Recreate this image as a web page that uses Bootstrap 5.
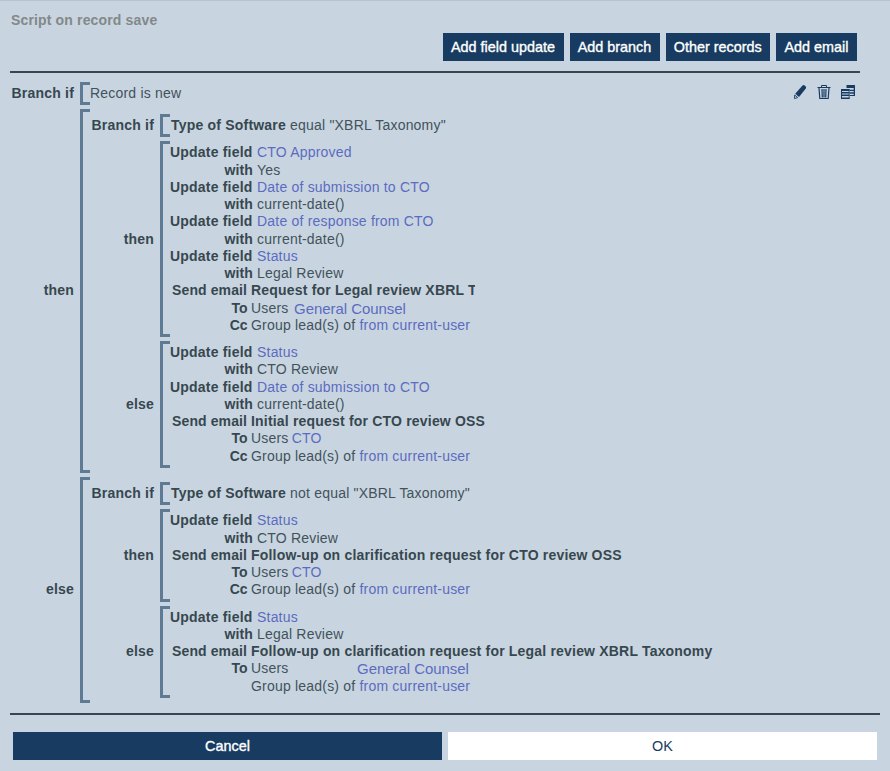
<!DOCTYPE html>
<html lang="en">
<head>
<meta charset="utf-8">
<title>Script on record save</title>
<meta name="viewport" content="width=device-width, initial-scale=1">
<link href="https://cdn.jsdelivr.net/npm/bootstrap@5.3.0/dist/css/bootstrap.min.css" rel="stylesheet">
<style>
body{background:#c8d5e0;color:#42525b;font:14px/17.25px "Liberation Sans",Arial,sans-serif;letter-spacing:.2px;height:771px;overflow:hidden;border-top:1px solid #b4c4d1}
b,.tag{font-weight:700;color:#37474f}
.heading{font-size:14px;line-height:17px;font-weight:700;color:#838888;letter-spacing:.15px;margin:0;padding:11px 0 0 11px}
.tools{gap:6px;padding:4px 33px 0 0}
.act{--bs-btn-border-radius:0;--bs-btn-border-width:0;--bs-btn-font-size:14.4px;--bs-btn-line-height:28px;--bs-btn-padding-y:0;--bs-btn-padding-x:8px;--bs-btn-color:#fff;--bs-btn-bg:#183c61;--bs-btn-hover-bg:#214d79;--bs-btn-hover-color:#fff;letter-spacing:0;-webkit-text-stroke:.35px currentColor;white-space:nowrap}
.tools .act{padding:0 8.6px 0 8px}
.act-ok{--bs-btn-bg:#fff;--bs-btn-color:#183c61;-webkit-text-stroke:0}
.rule{height:2px;background:#37474f;margin-left:10px}
.rule-top{width:850px;margin-top:10px}
.rule-end{width:870px;margin-top:10.5px}
.script{padding-top:8.7px}
.tag{flex:none;width:80px;text-align:right;padding-right:6px}
.tag-in{width:70px}
.tag-up{padding-bottom:1.5px}
.brace{position:relative;border-left:3px solid #5f7b94;padding:3px 0}
.brace::before,.brace::after{content:"";position:absolute;left:0;width:7px;height:3px;background:#5f7b94}
.brace::before{top:0}.brace::after{bottom:0}
.outer{padding:5.125px 0 5.125px 7px}
.line{display:flex;height:17.25px;white-space:pre}
.line>b:first-child{flex:none;width:82px;text-align:right;margin-left:7px;margin-right:5px}
.line>b.word{width:83px;margin-right:4px;letter-spacing:.1px}
.line.mail>b:first-child{width:77px;margin-right:4px;letter-spacing:.1px}
.line.mail>b.dest{width:77.6px;margin-right:3.4px;letter-spacing:0}
.subject{letter-spacing:.19px}
.cond{padding-left:7.5px;white-space:pre;height:23.25px}
.cond-field{padding-left:8px}
.plain{padding-left:7px}
.gap-b{margin-bottom:4px}
.ref{color:#5c6bc0}
.near{margin-left:-1px}
.big{font-size:15px;letter-spacing:-.05px;padding-left:5.5px;line-height:18px}
.far{padding-left:68.5px}
.cut{width:224px;overflow:hidden}
.icons{gap:8px;padding-right:34px;height:20px;padding-bottom:2px}
.foot{gap:6px;padding:17px 13px 0}
</style>
<script src="https://cdn.jsdelivr.net/npm/bootstrap@5.3.0/dist/js/bootstrap.bundle.min.js"></script>
</head>
<body>
<h1 class="heading">Script on record save</h1>
<div class="tools d-flex justify-content-end">
<button class="btn act">Add field update</button><button class="btn act">Add branch</button><button class="btn act">Other records</button><button class="btn act">Add email</button>
</div>
<div class="rule rule-top"></div>
<main class="script">
<div class="d-flex align-items-center gap-b">
<div class="tag">Branch if</div><div class="brace cond plain">Record is new</div>
<div class="icons d-flex ms-auto align-items-center">
<svg width="16" height="16" viewBox="0 0 16 16" fill="#183c61"><path d="M10.500 1.500q1-.9 2.200 0l1 .9q.8.900.1 2L7 13 3.200 9.800z"/><path d="M2.700 11l3 2.600-3.200 1z" fill="#c8d5e0" stroke="#183c61" stroke-width=".9"/></svg>
<svg width="16" height="16" viewBox="0 0 16 16" fill="none" stroke="#183c61"><path d="M1.500 3.500h13M5.500 3V1.500h5V3"/><path d="M3 4l.8 10.500h8.400L13 4M6 5l.3 8.500M8 5v8.500M10 5l-.3 8.500" stroke-width="1.200"/></svg>
<svg width="16" height="16" viewBox="0 0 16 16" fill="#183c61"><path d="M6.500 1H15v11h-5v-1h3.700V9.700H10v-1.400h3.700V7H10V5.700h3.700V4H6.500z"/><path d="M1 5h8.500v2H1zM1 8h8.500v1.500H1zM1 10.500h8.500V12H1zM1 13.500h8.500V15H1z"/><path d="M1 5h1v10H1zM8.700 5h.8v10h-.8z"/></svg>
</div>
</div>
<div class="d-flex align-items-center gap-b">
<div class="tag tag-up">then</div>
<div class="brace outer">
<div class="d-flex align-items-center gap-b"><div class="tag tag-in">Branch if</div><div class="brace cond cond-field"><b>Type of Software</b> equal "XBRL Taxonomy"</div></div>
<div class="d-flex align-items-center gap-b"><div class="tag tag-in">then</div><div class="brace">
<div class="line"><b>Update field</b><span class="ref">CTO Approved</span></div>
<div class="line"><b class="word">with</b>Yes</div>
<div class="line"><b>Update field</b><span class="ref">Date of submission to CTO</span></div>
<div class="line"><b class="word">with</b>current-date()</div>
<div class="line"><b>Update field</b><span class="ref">Date of response from CTO</span></div>
<div class="line"><b class="word">with</b>current-date()</div>
<div class="line"><b>Update field</b><span class="ref">Status</span></div>
<div class="line"><b class="word">with</b>Legal Review</div>
<div class="line mail"><b>Send email</b><b class="subject cut">Request for Legal review XBRL T</b></div>
<div class="line mail"><b class="dest">To</b>Users<span class="ref big">General Counsel</span></div>
<div class="line mail"><b class="dest">Cc</b>Group lead(s) of <span class="ref">from current-user</span></div>
</div></div>
<div class="d-flex align-items-center"><div class="tag tag-in">else</div><div class="brace">
<div class="line"><b>Update field</b><span class="ref">Status</span></div>
<div class="line"><b class="word">with</b>CTO Review</div>
<div class="line"><b>Update field</b><span class="ref">Date of submission to CTO</span></div>
<div class="line"><b class="word">with</b>current-date()</div>
<div class="line mail"><b>Send email</b><b class="subject">Initial request for CTO review OSS</b></div>
<div class="line mail"><b class="dest">To</b>Users <span class="ref near">CTO</span></div>
<div class="line mail"><b class="dest">Cc</b>Group lead(s) of <span class="ref">from current-user</span></div>
</div></div>
</div>
</div>
<div class="d-flex align-items-center">
<div class="tag">else</div>
<div class="brace outer">
<div class="d-flex align-items-center gap-b"><div class="tag tag-in">Branch if</div><div class="brace cond cond-field"><b>Type of Software</b> not equal "XBRL Taxonomy"</div></div>
<div class="d-flex align-items-center gap-b"><div class="tag tag-in">then</div><div class="brace">
<div class="line"><b>Update field</b><span class="ref">Status</span></div>
<div class="line"><b class="word">with</b>CTO Review</div>
<div class="line mail"><b>Send email</b><b class="subject">Follow-up on clarification request for CTO review OSS</b></div>
<div class="line mail"><b class="dest">To</b>Users <span class="ref near">CTO</span></div>
<div class="line mail"><b class="dest">Cc</b>Group lead(s) of <span class="ref">from current-user</span></div>
</div></div>
<div class="d-flex align-items-center"><div class="tag tag-in">else</div><div class="brace">
<div class="line"><b>Update field</b><span class="ref">Status</span></div>
<div class="line"><b class="word">with</b>Legal Review</div>
<div class="line mail"><b>Send email</b><b class="subject">Follow-up on clarification request for Legal review XBRL Taxonomy</b></div>
<div class="line mail"><b class="dest">To</b>Users<span class="ref big far">General Counsel</span></div>
<div class="line mail"><b></b>Group lead(s) of <span class="ref">from current-user</span></div>
</div></div>
</div>
</div>
</main>
<div class="rule rule-end"></div>
<div class="foot d-flex"><button class="btn act flex-fill w-50">Cancel</button><button class="btn act act-ok flex-fill w-50">OK</button></div>
</body>
</html>
